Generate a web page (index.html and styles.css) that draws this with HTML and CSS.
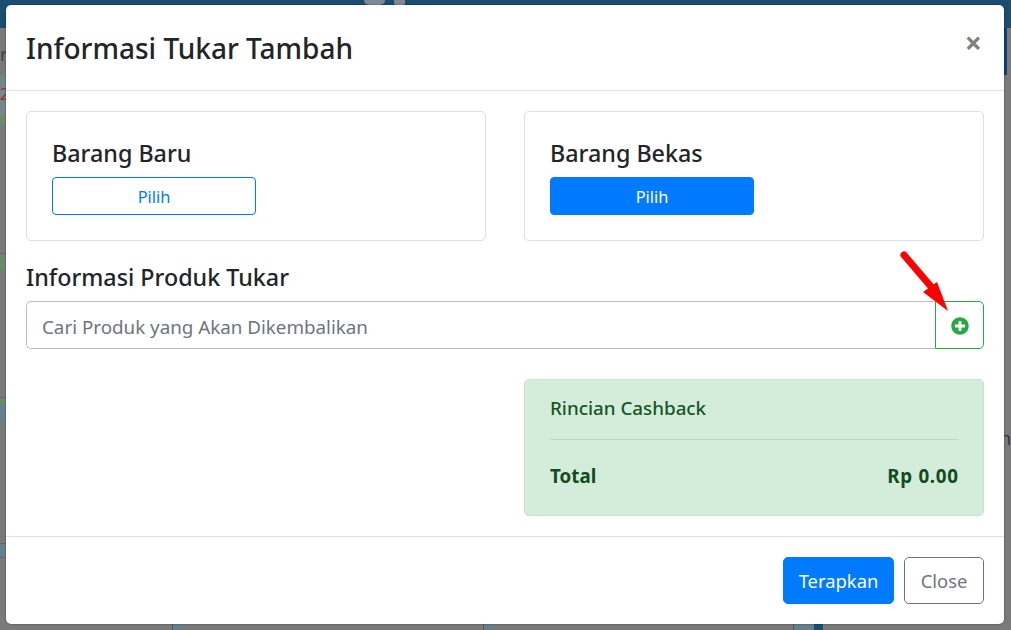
FILE: index.html
```html
<!DOCTYPE html>
<html lang="id">
<head>
<meta charset="utf-8">
<title>Informasi Tukar Tambah</title>
<link rel="stylesheet" href="styles.css">
</head>
<body>
<div class="page">
  <div class="topbar"></div>
  <div class="edge edge-photo-a"></div>
  <div class="edge edge-green-a"></div>
  <div class="edge edge-green-b"></div>
  <div class="edge edge-blue"></div>
  <div class="edge edge-blue-b"></div>
  <div class="edge edge-blue-c"></div>
  <div class="edge-right"></div>
  <div class="peek peek-a"></div>
  <div class="peek peek-b"></div>
  <div class="peek peek-c"></div>
  <div class="logo-peek logo-a"></div>
  <div class="logo-peek logo-b"></div>
  <span class="clip clip-r">r</span>
  <span class="clip clip-two">2</span>
  <span class="clip clip-n">n</span>
</div>
<div class="modal">
  <header class="modal-header">
    <h4 class="modal-title">Informasi Tukar Tambah</h4>
    <span class="modal-close">×</span>
  </header>
  <main class="modal-body">
    <div class="choices">
      <section class="card">
        <h5 class="card-title">Barang Baru</h5>
        <button class="pick pick-outline">Pilih</button>
      </section>
      <section class="card">
        <h5 class="card-title">Barang Bekas</h5>
        <button class="pick pick-solid">Pilih</button>
      </section>
    </div>
    <h5 class="section-title">Informasi Produk Tukar</h5>
    <div class="search">
      <input class="search-input" type="text" placeholder="Cari Produk yang Akan Dikembalikan">
      <button class="search-add" aria-label="Tambah">
        <svg class="plus-icon" viewBox="0 0 512 512"><path fill="#28a745" d="M256 8C119 8 8 119 8 256s111 248 248 248 248-111 248-248S393 8 256 8zm144 276c0 6.600-5.400 12-12 12h-92v92c0 6.600-5.400 12-12 12h-56c-6.600 0-12-5.400-12-12v-92h-92c-6.600 0-12-5.400-12-12v-56c0-6.600 5.400-12 12-12h92v-92c0-6.600 5.400-12 12-12h56c6.600 0 12 5.400 12 12v92h92c6.600 0 12 5.400 12 12v56z"/></svg>
      </button>
    </div>
    <div class="summary-row">
      <section class="summary">
        <div class="summary-title">Rincian Cashback</div>
        <hr class="summary-rule">
        <div class="summary-total"><span>Total</span><span class="summary-amount">Rp 0.00</span></div>
      </section>
    </div>
  </main>
  <footer class="modal-footer">
    <button class="btn btn-apply">Terapkan</button>
    <button class="btn btn-close">Close</button>
  </footer>
</div>
<svg class="arrow" viewBox="0 0 1011 630" aria-hidden="true">
  <path d="M904 255 L933 289" stroke="#ff0000" stroke-width="7" stroke-linecap="round" fill="none"/>
  <path d="M948 311 L923 292 L937 282 Z" fill="#ff0000"/>
</svg>
</body>
</html>
```
FILE: styles.css
```css
* { box-sizing: border-box; }
html, body { margin: 0; height: 100%; overflow: hidden; }
body { font-family: "Noto Sans", "Open Sans", sans-serif; color: #212529; background: #7a7a7a; }
.page { width: 100%; height: 100%; }
.topbar { height: 28px; background: #1a4e70; }
.edge { position: absolute; left: 0; width: 6px; }
.edge-photo-a { top: 75px; height: 40px; background: #75868a; }
.edge-green-a { top: 115px; height: 10px; background: #6f8a6a; }
.edge-green-b { top: 253px; height: 17px; background: #6b8a6c; border-top: 1px solid #5f6a62; }
.edge-blue { top: 397px; height: 8px; background: #6b8a6c; border-top: 1px solid #5f6a62; }
.edge-blue-b { top: 405px; height: 18px; background: #66808a; }
.edge-blue-c { top: 543px; height: 15px; background: #66808a; border-top: 1px solid #5f6a62; border-bottom: 1px solid #5f6a62; }
.edge-right { position: absolute; left: 1004px; top: 28px; width: 3px; height: 47px; background: #0d3f7a; }
.peek { position: absolute; top: 624px; height: 6px; background: #66808a; border-left: 1px solid #5a5a5a; }
.peek-a { left: 172px; width: 11px; }
.peek-b { left: 483px; width: 11px; }
.peek-c { left: 793px; width: 30px; background: linear-gradient(90deg, #66808a 0 20px, #1a4e70 20px); }
.logo-peek { position: absolute; top: 0; height: 5px; background: #7d8a93; }
.logo-a { left: 364px; width: 21px; border-radius: 0 0 9px 9px; }
.logo-b { left: 394px; width: 11px; border-radius: 0 0 2px 2px; }
.clip { position: absolute; line-height: 1; font-size: 18px; }
.clip-r { left: 0; top: 45px; color: #3c4246; }
.clip-two { left: 0; top: 86px; font-size: 16px; color: #a82a2a; }
.clip-n { left: 1000px; top: 429px; color: #33383c; }
.modal { position: absolute; left: 6px; top: 5px; width: 998px; height: 619px; background: #fff; border-radius: 5px; box-shadow: 0 0 2px rgba(0,0,0,.5); display: flex; flex-direction: column; }
.modal-header { height: 86px; flex: none; padding: 0 20px; border-bottom: 1px solid #dee2e6; display: flex; align-items: center; justify-content: space-between; }
.modal-title { margin: 2px 0 0; font-size: 28px; font-weight: 500; line-height: 1.2; }
.modal-close { font-size: 30px; font-weight: 700; color: #7f7f7f; line-height: 1; margin-right: 2px; margin-top: -10px; }
.modal-body { flex: 1; padding: 20px; }
.choices { display: grid; grid-template-columns: 460px 460px; column-gap: 38px; }
.card { height: 130px; border: 1px solid #dfdfdf; border-radius: 5px; padding: 25px; }
.card-title { margin: 0 0 7px; font-size: 23.300px; font-weight: 500; line-height: 33px; }
.pick { display: block; width: 204px; height: 38px; border-radius: 4px; font: 400 16.400px "Noto Sans", "Open Sans", sans-serif; }
.pick-outline { background: #fff; color: #007bff; border: 1px solid #007bff; }
.pick-solid { background: #007bff; color: #fff; border: 1px solid #007bff; }
.section-title { margin: 20px 0 7px; font-size: 23.300px; font-weight: 500; line-height: 33px; }
.search { display: flex; height: 48px; }
.search-input { flex: 1; min-width: 0; height: 48px; padding: 3px 15px 0; border: 1px solid #bdbdbd; border-right: 0; border-radius: 5px 0 0 5px; font: 400 18.800px "Noto Sans", "Open Sans", sans-serif; outline: none; }
.search-input::placeholder { color: #6c757d; opacity: 1; }
.search-add { width: 49px; height: 48px; padding: 0; background: #fff; border: 1px solid #28a745; border-radius: 0 5px 5px 0; display: flex; align-items: center; justify-content: center; }
.plus-icon { width: 18px; height: 18px; display: block; margin-top: 1px; }
.summary-row { margin-top: 30px; display: flex; justify-content: flex-end; }
.summary { width: 460px; height: 137px; padding: 15px 25px; background: #d4edda; border: 1px solid #c3e6cb; border-radius: 5px; color: #155724; }
.summary-title { font-size: 18.800px; font-weight: 500; line-height: 27px; }
.summary-rule { margin: 17px 0 23px; border: 0; border-top: 1px solid #bdd6c4; }
.summary-total { display: flex; justify-content: space-between; font-size: 18.800px; font-weight: 700; line-height: 27px; color: #124d20; }
.summary-amount { letter-spacing: .7px; margin-right: -.7px; }
.modal-footer { height: 88px; flex: none; padding: 0 20px; border-top: 1px solid #dee2e6; display: flex; align-items: center; justify-content: flex-end; gap: 10px; }
.btn { height: 47px; border-radius: 5px; font: 400 18.400px "Noto Sans", "Open Sans", sans-serif; }
.btn-apply { width: 111px; background: #007bff; border: 1px solid #007bff; color: #fff; }
.btn-close { width: 80px; background: #fff; border: 1px solid #6c757d; color: #6c757d; }
.arrow { position: absolute; left: 0; top: 0; width: 1011px; height: 630px; pointer-events: none; }
```
